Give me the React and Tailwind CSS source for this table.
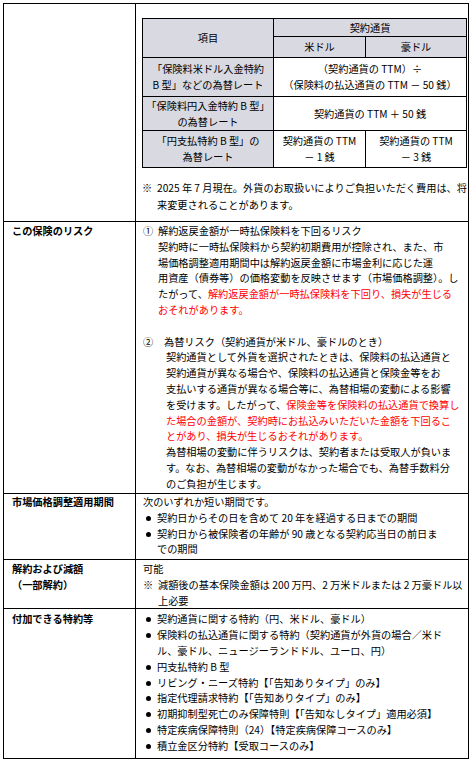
const FONT = "font-['Noto_Sans_CJK_JP','Noto_Sans',sans-serif]";

function Line({ children, className = "" }) {
  return <div className={"whitespace-nowrap " + className}>{children}</div>;
}

function Bullet({ lines }) {
  return (
    <div className="flex">
      <div className="w-[14px] shrink-0 flex justify-start pl-[3px] pt-[6px]">
        <span className="block w-[5px] h-[5px] rounded-full bg-black" />
      </div>
      <div>
        {lines.map((l, i) => (
          <Line key={i}>{l}</Line>
        ))}
      </div>
    </div>
  );
}

function RateTable() {
  const th = "border border-black bg-[#d9d9e1] text-center align-middle font-normal";
  const td = "border border-black text-center align-middle";
  return (
    <table className="w-[324px] table-fixed border-collapse leading-[15.8px]">
      <colgroup>
        <col className="w-[131px]" />
        <col className="w-[92px]" />
        <col className="w-[101px]" />
      </colgroup>
      <tbody>
        <tr className="h-[18px]">
          <th rowSpan={2} className={th}>項目</th>
          <th colSpan={2} className={th}>契約通貨</th>
        </tr>
        <tr className="h-[21px]">
          <th className={th}>米ドル</th>
          <th className={th}>豪ドル</th>
        </tr>
        <tr className="h-[39px]">
          <td className={th}>
            <Line>「保険料米ドル入金特約</Line>
            <Line>B 型」などの為替レート</Line>
          </td>
          <td colSpan={2} className={td}>
            <Line>（契約通貨の TTM）÷</Line>
            <Line>（保険料の払込通貨の TTM － 50 銭）</Line>
          </td>
        </tr>
        <tr className="h-[34px]">
          <td className={th}>
            <Line>「保険料円入金特約 B 型」</Line>
            <Line>の為替レート</Line>
          </td>
          <td colSpan={2} className={td}>
            <Line>契約通貨の TTM ＋ 50 銭</Line>
          </td>
        </tr>
        <tr className="h-[37px]">
          <td className={th}>
            <Line>「円支払特約 B 型」の</Line>
            <Line>為替レート</Line>
          </td>
          <td className={td}>
            <Line>契約通貨の TTM</Line>
            <Line>－ 1 銭</Line>
          </td>
          <td className={td}>
            <Line>契約通貨の TTM</Line>
            <Line>－ 3 銭</Line>
          </td>
        </tr>
      </tbody>
    </table>
  );
}

export default function App() {
  const label = "border border-black align-top pl-[8px] font-bold";
  const cell = "border border-black align-top pl-[7px] pr-[2px]";
  const red = "text-[#ff0000]";
  return (
    <div className={"min-h-screen bg-white pl-[3px] pt-[3px] text-black " + FONT}>
      <table className="w-[466px] table-fixed border-collapse text-[10.2px] leading-[15.8px]">
        <colgroup>
          <col className="w-[132px]" />
          <col />
        </colgroup>
        <tbody>
          <tr>
            <td className="border border-black h-[216px]"></td>
            <td className="border border-black align-top pl-[6px] pr-[1px] pt-[14px] pb-[8px]">
              <RateTable />
              <div className="mt-[12px] flex leading-[16.5px]">
                <div className="w-[15px] shrink-0">※</div>
                <div>
                  <Line>2025 年 7 月現在。外貨のお取扱いによりご負担いただく費用は、将</Line>
                  <Line>来変更されることがあります。</Line>
                </div>
              </div>
            </td>
          </tr>

          <tr>
            <td className={label + " h-[272px] pt-[1px]"}>この保険のリスク</td>
            <td className={cell + " pt-[1px]"}>
              <div className="flex">
                <div className="w-[15px] shrink-0">①</div>
                <div>
                  <Line>解約返戻金額が一時払保険料を下回るリスク</Line>
                  <Line>契約時に一時払保険料から契約初期費用が控除され、また、市</Line>
                  <Line>場価格調整適用期間中は解約返戻金額に市場金利に応じた運</Line>
                  <Line>用資産（債券等）の価格変動を反映させます（市場価格調整）。し</Line>
                  <Line>
                    たがって、<span className={red}>解約返戻金額が一時払保険料を下回り、損失が生じる</span>
                  </Line>
                  <Line className={red}>おそれがあります。</Line>
                </div>
              </div>
              <div className="h-[15.8px]" />
              <div className="flex">
                <div className="w-[23px] shrink-0">②</div>
                <div>
                  <Line className="-ml-[2px]">為替リスク（契約通貨が米ドル、豪ドルのとき）</Line>
                  <Line>契約通貨として外貨を選択されたときは、保険料の払込通貨と</Line>
                  <Line>契約通貨が異なる場合や、保険料の払込通貨と保険金等をお</Line>
                  <Line>支払いする通貨が異なる場合等に、為替相場の変動による影響</Line>
                  <Line>
                    を受けます。したがって、<span className={red}>保険金等を保険料の払込通貨で換算し</span>
                  </Line>
                  <Line className={red}>た場合の金額が、契約時にお払込みいただいた金額を下回るこ</Line>
                  <Line className={red}>とがあり、損失が生じるおそれがあります。</Line>
                  <Line>為替相場の変動に伴うリスクは、契約者または受取人が負いま</Line>
                  <Line>す。なお、為替相場の変動がなかった場合でも、為替手数料分</Line>
                  <Line>のご負担が生じます。</Line>
                </div>
              </div>
            </td>
          </tr>

          <tr>
            <td className={label + " h-[66px] pt-0"}>市場価格調整適用期間</td>
            <td className={cell + " pt-0"}>
              <Line>次のいずれか短い期間です。</Line>
              <Bullet lines={["契約日からその日を含めて 20 年を経過する日までの期間"]} />
              <Bullet
                lines={["契約日から被保険者の年齢が 90 歳となる契約応当日の前日ま", "での期間"]}
              />
            </td>
          </tr>

          <tr>
            <td className={label + " h-[47px] pt-[1px]"}>
              <Line>解約および減額</Line>
              <Line>（一部解約）</Line>
            </td>
            <td className={cell + " pt-[1px]"}>
              <Line>可能</Line>
              <div className="flex">
                <div className="w-[15px] shrink-0">※</div>
                <div>
                  <Line>減額後の基本保険金額は 200 万円、2 万米ドルまたは 2 万豪ドル以</Line>
                  <Line>上必要</Line>
                </div>
              </div>
            </td>
          </tr>

          <tr>
            <td className={label + " h-[149px] pt-[2px]"}>付加できる特約等</td>
            <td className={cell + " pt-[2px] pb-[4px]"}>
              <Bullet lines={["契約通貨に関する特約（円、米ドル、豪ドル）"]} />
              <Bullet
                lines={[
                  "保険料の払込通貨に関する特約（契約通貨が外貨の場合／米ド",
                  "ル、豪ドル、ニュージーランドドル、ユーロ、円）",
                ]}
              />
              <Bullet lines={["円支払特約 B 型"]} />
              <Bullet lines={["リビング・ニーズ特約【「告知ありタイプ」のみ】"]} />
              <Bullet lines={["指定代理請求特約【「告知ありタイプ」のみ】"]} />
              <Bullet lines={["初期抑制型死亡のみ保障特則【「告知なしタイプ」適用必須】"]} />
              <Bullet lines={["特定疾病保障特則（24）【特定疾病保障コースのみ】"]} />
              <Bullet lines={["積立金区分特約【受取コースのみ】"]} />
            </td>
          </tr>
        </tbody>
      </table>
    </div>
  );
}
